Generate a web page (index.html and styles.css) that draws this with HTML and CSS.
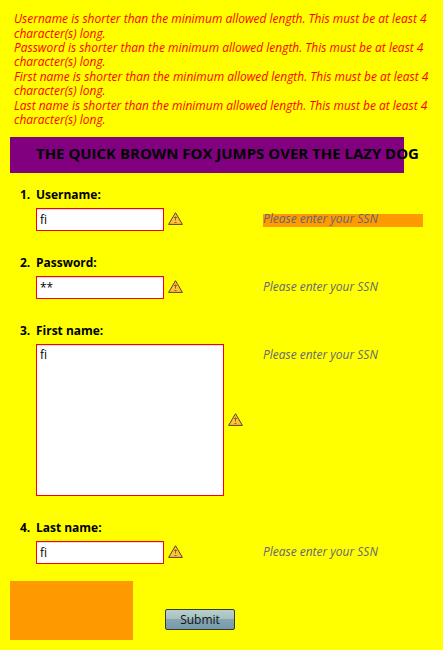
FILE: index.html
```html
<!DOCTYPE html>
<html lang="en">
<head>
<meta charset="utf-8">
<title>Form</title>
<link rel="stylesheet" href="styles.css">
</head>
<body>
<svg class="defs" width="0" height="0">
  <symbol id="warn" viewBox="0 0 15 13">
    <path d="M7.5 .7 L14.4 12.4 H.6 Z" fill="#ffc13a" stroke="#5b4030" stroke-width="1" stroke-linejoin="round"/>
    <path d="M7.5 4.5v4M6 5.5h3M6.5 10.5h2" fill="none" stroke="#8a5a1c" stroke-width=".9"/>
  </symbol>
</svg>
<div class="errors">
  <p>Username is shorter than the minimum allowed length. This must be at least 4 character(s) long.</p>
  <p>Password is shorter than the minimum allowed length. This must be at least 4 character(s) long.</p>
  <p>First name is shorter than the minimum allowed length. This must be at least 4 character(s) long.</p>
  <p>Last name is shorter than the minimum allowed length. This must be at least 4 character(s) long.</p>
</div>
<h1 class="title">THE QUICK BROWN FOX JUMPS OVER THE LAZY DOG</h1>
<form class="form">
  <div class="field">
    <span class="num">1.</span><label for="f1">Username:</label>
    <div class="control"><input id="f1" type="text" value="fi"><svg class="warn"><use href="#warn"/></svg></div>
    <div class="hint hint-marked">Please enter your SSN</div>
  </div>
  <div class="field">
    <span class="num">2.</span><label for="f2">Password:</label>
    <div class="control"><input id="f2" type="text" value="**"><svg class="warn"><use href="#warn"/></svg></div>
    <div class="hint">Please enter your SSN</div>
  </div>
  <div class="field field-tall">
    <span class="num">3.</span><label for="f3">First name:</label>
    <div class="control"><textarea id="f3">fi</textarea><svg class="warn"><use href="#warn"/></svg></div>
    <div class="hint">Please enter your SSN</div>
  </div>
  <div class="field">
    <span class="num">4.</span><label for="f4">Last name:</label>
    <div class="control"><input id="f4" type="text" value="fi"><svg class="warn"><use href="#warn"/></svg></div>
    <div class="hint">Please enter your SSN</div>
  </div>
  <div class="actions">
    <div class="block"></div>
    <button class="submit" type="button">Submit</button>
  </div>
</form>
</body>
</html>
```
FILE: styles.css
```css
* { box-sizing: border-box; }
body {
  margin: 0;
  padding: 12px 10px 0;
  height: 650px;
  overflow: hidden;
  background: #ff0;
  color: #000;
  font: 11.97px/14.4px "Open Sans", sans-serif;
}
.defs { position: absolute; }
.errors { height: 125px; padding: .15px 0 0 4px; color: #f00; font-style: italic; }
.errors p { margin: 0; }
.title {
  width: 394px;
  height: 36px;
  margin: 0;
  padding-left: 26px;
  background: #800080;
  font-size: 14.98px;
  line-height: 32px;
  white-space: nowrap;
}
.form { padding-top: 15px; }
.field {
  display: grid;
  grid-template-columns: 26px 227px 160px;
  grid-template-rows: 20px 23px;
  height: 68px;
  align-content: start;
}
.field-tall { grid-template-rows: 20px 152px; height: 197px; }
.num { padding-left: 10px; font-weight: bold; }
label { grid-column: 2 / 4; font-weight: bold; }
.control { grid-column: 2; display: flex; align-items: center; gap: 4px; }
input, textarea {
  margin: 0;
  padding: 1px 3px;
  border: 1px solid #f00;
  border-radius: 0;
  background: #fff;
  box-shadow: inset 0 1px #ddd;
  color: #000;
  font: inherit;
  outline: 0;
}
input { width: 128px; height: 23px; }
textarea { width: 188px; height: 152px; padding-top: 3px; resize: none; }
.warn { width: 15px; height: 13px; margin-top: -2px; }
.field-tall .warn { margin-top: -1px; }
.hint {
  height: 13px;
  margin-top: 6px;
  color: #667;
  font-style: italic;
  line-height: 10px;
}
.hint-marked { background: #f90; }
.actions { display: flex; margin-top: -8px; }
.block { width: 123px; height: 59px; background: #f90; }
.submit {
  width: 70px;
  height: 21px;
  margin: 28px 0 0 32px;
  padding: 1px 0 0;
  border: 1px solid #333d20;
  border-radius: 2px;
  background: linear-gradient(#b8d0cc, #a4bfc3 50%, #86a5b3 50%, #7698ab);
  color: #111;
  font: inherit;
}
```
